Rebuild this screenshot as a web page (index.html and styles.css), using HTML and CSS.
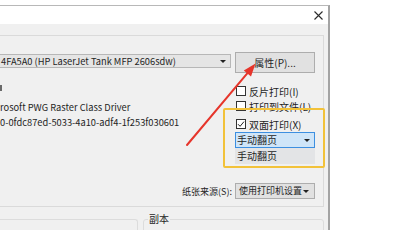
FILE: index.html
```html
<!DOCTYPE html>
<html lang="zh-CN">
<head>
<meta charset="utf-8">
<title>打印</title>
<link rel="stylesheet" href="styles.css">
</head>
<body>
<div class="page">
  <div class="bg-strip"></div>
  <div class="dialog">
    <div class="titlebar">
      <svg class="close" viewBox="0 0 9 9" width="9" height="9"><path d="M0.5 0.5 L8.5 8.5 M8.5 0.5 L0.5 8.5" stroke="#2b2b2b" stroke-width="1.1" fill="none"/></svg>
    </div>
    <div class="dlg-body">
      <div class="panel">
        <div class="cols">
          <div class="left">
            <div class="combo printer"><span class="latin">4FA5A0 (HP LaserJet Tank MFP 2606sdw)</span><i class="tri"></i></div>
            <div class="stub"></div>
            <div class="info latin first">rosoft PWG Raster Class Driver</div>
            <div class="info latin">0-0fdc87ed-5033-4a10-adf4-1f253f030601</div>
          </div>
          <div class="right">
            <button class="btn" type="button">属性(P)...</button>
            <div class="check c1"><span class="box"></span><span>反片打印(I)</span></div>
            <div class="check c2"><span class="box"></span><span>打印到文件(L)</span></div>
            <div class="check c3"><span class="box"><svg viewBox="0 0 8 8" width="8" height="8"><path d="M1 4.2 L3.1 6.3 L7 1.6" stroke="#222" stroke-width="1" fill="none"/></svg></span><span>双面打印(X)</span></div>
            <div class="combo sel"><span>手动翻页</span><i class="tri"></i></div>
            <div class="option">手动翻页</div>
          </div>
        </div>
        <div class="source-row">
          <span class="src-label">纸张来源(S):</span>
          <div class="combo src"><span>使用打印机设置</span><i class="tri"></i></div>
        </div>
      </div>
      <div class="groups">
        <div class="group g1"></div>
        <fieldset class="group g2"><legend>副本</legend></fieldset>
      </div>
    </div>
  </div>
  <div class="highlight"></div>
  <svg class="annot" viewBox="0 0 400 230" width="400" height="230">
    <line x1="187" y1="145" x2="248.5" y2="71.8" stroke="#e6352b" stroke-width="2" stroke-linecap="round"/>
    <polygon points="255.5,63.5 251,76.5 243.8,70.5" fill="#e6352b"/>
  </svg>
</div>
</body>
</html>
```

FILE: styles.css
```css
* { box-sizing: border-box; }
html, body { margin: 0; padding: 0; background: #fff; }
body {
  font-family: "Noto Sans CJK SC", "Noto Sans", sans-serif;
  font-size: 10px;
  color: #1f1f1f;
}
.page { position: relative; width: 400px; height: 230px; overflow: hidden; }

.bg-strip { height: 5px; background: #fff; }

.dialog {
  width: 330px; height: 225px;
  border-top: 1px solid #b8b8b8;
  border-right: 2px solid #a3a3a3;
  background: #f0f0f0;
}
.titlebar {
  height: 18px; background: #fff;
  display: flex; justify-content: flex-end; align-items: center;
  padding-right: 5px;
}
.close { display: block; }

.dlg-body { padding: 11px 4px 0 0; }
.panel {
  border: 1px solid #dadada; border-left: none;
  padding: 16px 8px 7px 0;
}
.cols { display: flex; gap: 4px; align-items: flex-start; }
.left { width: 231px; display: flex; flex-direction: column; }
.right { width: 80px; display: flex; flex-direction: column; }

.latin { font-size: 9.3px; }

.combo {
  display: flex; align-items: center; justify-content: space-between;
  white-space: nowrap; line-height: 12px;
}
.tri {
  width: 0; height: 0; flex: none;
  border-left: 3px solid transparent; border-right: 3px solid transparent;
  border-top: 3px solid #222;
}
.printer {
  margin-top: 2px; height: 14px;
  border: 1px solid #b7b7b7; border-left: none;
  background: #e5e5e5; padding: 0 4px 0 1px;
}
.stub { margin-top: 17px; width: 2px; height: 6px; background: #6a6a6a; }
.info { line-height: 15px; white-space: nowrap; }
.info.first { margin-top: 9px; }

.btn {
  height: 21px; width: 80px; padding: 0;
  border: 1px solid #adadad; background: #e1e1e1;
  font: inherit; color: inherit;
}
.check { display: flex; align-items: center; gap: 3px; height: 14px; white-space: nowrap; }
.check.c1 { margin-top: 11px; }
.check.c2 { margin-top: 1px; }
.check.c3 { margin-top: 4px; }
.box {
  width: 10px; height: 10px; margin-left: 1px; flex: none;
  border: 1px solid #333; background: #fff;
  display: flex; align-items: center; justify-content: center;
}
.box svg { display: block; }

.sel {
  margin-top: 1px; height: 16px;
  border: 1px solid #3d8fe0; background: #cfe5f8;
  padding: 0 4px 0 1px;
}
.option {
  height: 16px; line-height: 16px; padding-left: 2px;
  background: #e3e4e6;
}

.source-row {
  margin-top: 19px;
  display: flex; justify-content: flex-end; align-items: center; gap: 3px;
  font-size: 9px;
}
.src {
  width: 80px; height: 16px;
  border: 1px solid #adadad; background: #e1e1e1;
  padding: 0 5px 0 3px;
}

.groups { display: flex; align-items: flex-start; gap: 5px; margin-top: 6px; }
.g1 {
  width: 138px; height: 30px; margin-top: 6px;
  border-top: 1px solid #dcdcdc; border-right: 1px solid #dcdcdc;
  border-top-right-radius: 3px;
}
.g2 {
  width: 181px; height: 36px; margin: 0; padding: 0 4px;
  border: 1px solid #dcdcdc; border-radius: 3px;
}
.g2 legend { padding: 0 1px; line-height: 12px; font-size: 10px; }

.highlight {
  position: absolute; left: 223px; top: 108px; width: 102px; height: 60px;
  border: 2px solid #f2c23a; border-radius: 2px;
}
.annot { position: absolute; left: 0; top: 0; pointer-events: none; }
```
